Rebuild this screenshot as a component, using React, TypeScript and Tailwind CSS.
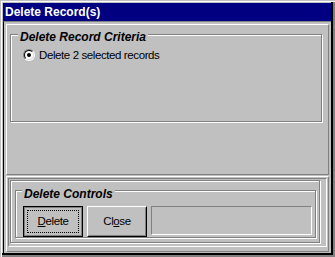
import React from "react";

const raised =
  "border border-t-white border-l-white border-r-[#808080] border-b-[#808080]";
const sunken =
  "border border-t-[#808080] border-l-[#808080] border-r-white border-b-white";
const etched =
  "border border-[#808080] shadow-[inset_1px_1px_0_#fff,1px_1px_0_#fff]";

function FrameLabel({ text, top }: { text: string; top: string }) {
  return (
    <span
      className={`absolute ${top} bg-[#c0c0c0] px-[2px] text-[12px] leading-[14px] font-bold italic text-black`}
    >
      {text}
    </span>
  );
}

function Radio() {
  return (
    <div className="w-[12px] h-[12px] rounded-full border border-t-[#808080] border-l-[#808080] border-r-white border-b-white">
      <div className="w-full h-full rounded-full border border-t-black border-l-black border-r-[#dfdfdf] border-b-[#dfdfdf] bg-white flex items-center justify-center">
        <div className="w-[4px] h-[4px] rounded-full bg-black" />
      </div>
    </div>
  );
}

export default function App() {
  return (
    <div className="w-[335px] h-[257px] bg-[#c0c0c0] flex flex-col pl-[3px] pt-[3px] pr-[4px] pb-[4px] font-['Liberation_Sans',Arial,sans-serif] shadow-[inset_1px_1px_0_#c0c0c0,inset_2px_2px_0_#fff,inset_-2px_-2px_0_#808080,inset_-4px_-4px_0_#000]">
      <div className="h-[18px] bg-[#000080] flex items-center pl-[2px] text-[12px] font-bold text-white">
        Delete Record(s)
      </div>

      <div className="flex-1 flex flex-col border-l border-l-black border-t border-t-[#808080] pl-[2px] pt-[2px] pr-[2px] pb-[1px] gap-[1px]">
        {/* criteria section */}
        <div className={`h-[151px] ${raised} pl-[3px] pt-[9px]`}>
          <div className={`relative w-[312px] h-[88px] ${etched}`}>
            <FrameLabel text="Delete Record Criteria" top="left-[7px] top-[-5px]" />
            <div className="flex items-center gap-[4px] pl-[12px] pt-[14px] text-[11.5px] tracking-[-0.4px] text-black">
              <Radio />
              <span className="leading-[12px]">Delete 2 selected records</span>
            </div>
          </div>
        </div>

        {/* controls section */}
        <div className={`h-[76px] ${raised}`}>
          <div className={`ml-[1px] mt-[1px] w-[319px] h-[69px] ${sunken}`}>
            <div className={`ml-[1px] mt-[1px] w-[310px] h-[63px] ${etched} pl-[4px] pt-[9px]`}>
              <div className={`relative w-[301px] h-[48px] ${etched} pl-[7px] pt-[15px]`}>
                <FrameLabel text="Delete Controls" top="left-[6px] top-[-4px]" />
                <div className="flex gap-[4px] text-[11.5px] tracking-[-0.4px] text-black">
                  <div className="w-[60px] h-[31px] border border-black">
                    <div className="w-full h-full border border-[#808080] p-[2px]">
                      <div className="w-full h-full border border-dotted border-black flex items-center justify-center">
                        <span>
                          <span className="underline">D</span>elete
                        </span>
                      </div>
                    </div>
                  </div>
                  <div className="w-[60px] h-[31px] border border-t-white border-l-white border-r-black border-b-black">
                    <div className="w-full h-full border border-t-[#c0c0c0] border-l-[#c0c0c0] border-r-[#808080] border-b-[#808080] flex items-center justify-center">
                      <span>
                        Cl<span className="underline">o</span>se
                      </span>
                    </div>
                  </div>
                  <div className={`w-[161px] h-[29px] ${sunken}`} />
                </div>
              </div>
            </div>
          </div>
        </div>
      </div>
    </div>
  );
}
